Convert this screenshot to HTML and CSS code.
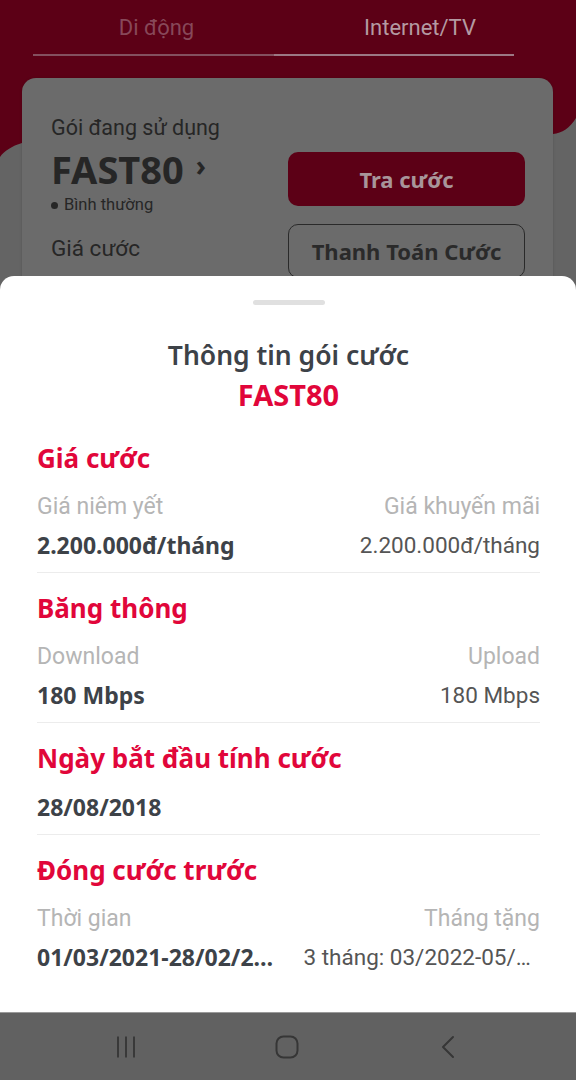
FILE: index.html
```html
<!DOCTYPE html>
<html>
  <head>
    <meta charset="utf-8">
    <link rel="stylesheet" href="styles.css">
  </head>
  <body>
    <div class="screen">
      <!-- page behind the sheet (already dimmed) -->
      <div class="app">
        <div class="hero">
          <nav class="tabs">
            <div class="tab">Di động</div>
            <div class="tab active">Internet/TV</div>
          </nav>
        </div>
        <div class="card">
          <div class="plan">
            <div class="plan-label">Gói đang sử dụng</div>
            <div class="plan-name">FAST80 <span class="chev">›</span></div>
            <div class="plan-status"><i class="dot"></i>Bình thường</div>
            <div class="plan-label price">Giá cước</div>
          </div>
          <div class="actions">
            <div class="btn btn-fill">Tra cước</div>
            <div class="btn btn-line">Thanh Toán Cước</div>
          </div>
        </div>
      </div>

      <!-- bottom sheet -->
      <div class="overlay">
        <div class="sheet">
          <div class="handle"></div>
          <header class="sheet-head">
            <h1>Thông tin gói cước</h1>
            <h2>FAST80</h2>
          </header>

          <section class="info">
            <h3>Giá cước</h3>
            <div class="row labels"><span>Giá niêm yết</span><span>Giá khuyến mãi</span></div>
            <div class="row values"><b>2.200.000đ/tháng</b><span>2.200.000đ/tháng</span></div>
          </section>

          <section class="info">
            <h3>Băng thông</h3>
            <div class="row labels"><span>Download</span><span>Upload</span></div>
            <div class="row values"><b>180 Mbps</b><span>180 Mbps</span></div>
          </section>

          <section class="info">
            <h3>Ngày bắt đầu tính cước</h3>
            <div class="row values"><b>28/08/2018</b></div>
          </section>

          <section class="info last">
            <h3>Đóng cước trước</h3>
            <div class="row labels"><span>Thời gian</span><span>Tháng tặng</span></div>
            <div class="row values"><b>01/03/2021-28/02/2022</b><span>3 tháng: 03/2022-05/2022</span></div>
          </section>
        </div>
      </div>

      <!-- system navigation -->
      <footer class="navbar">
        <svg width="24" height="24" viewBox="0 0 24 24"><path d="M4 1.5v21M12 1.5v21M20 1.5v21" stroke="#363636" stroke-width="1.8" fill="none"/></svg>
        <svg width="24" height="24" viewBox="0 0 24 24"><rect x="1.5" y="1.5" width="21" height="21" rx="7" stroke="#363636" stroke-width="2" fill="none"/></svg>
        <svg width="24" height="24" viewBox="0 0 24 24"><path d="M17 2L7 12l10 10" stroke="#363636" stroke-width="2" fill="none" stroke-linecap="round" stroke-linejoin="round"/></svg>
      </footer>
    </div>
  </body>
</html>
```

FILE: styles.css
```css
/* reset */
* { margin: 0; padding: 0; box-sizing: border-box; }
body { background: #646464; font-family: Roboto, "Noto Sans", sans-serif; }

.screen {
  position: relative;
  width: 576px;
  height: 1080px;
  overflow: hidden;
  background: #646464;
}

/* dimmed page behind the sheet */
.hero {
  height: 160px;
  background: #5c0016;
  clip-path: path('M0 0 H576 V118 C570 128 562 133 553 134 L22 143 C12 146 4 151 0 157 Z');
}
.tabs { display: flex; margin: 0 62px 0 33px; }
.tab {
  flex: 0 0 241px;
  height: 56px;
  padding: 15px 0 0 6px;
  text-align: center;
  font-size: 22px;
  line-height: 26px;
  color: #874859;
  border-bottom: 2px solid #84505f;
}
.tab.active { flex: 1; color: #b49aa2; border-bottom-color: #9c7884; padding-left: 52px; }

.card {
  position: relative;
  display: flex;
  justify-content: space-between;
  margin: -82px 23px 0 22px;
  height: 240px;
  padding: 37px 28px 0 29px;
  background: #6b6b6b;
  border-radius: 14px;
  box-shadow: 0 0 3px rgba(0, 0, 0, 0.15);
  color: #262626;
}
.plan-label { font-size: 21.5px; line-height: 26px; }
.plan-name {
  margin-top: 1px;
  font-family: "Noto Sans", sans-serif;
  font-weight: 700;
  font-size: 38px;
  line-height: 46px;
  white-space: nowrap;
}
.chev { font-size: 28px; vertical-align: 8px; margin-left: 2px; }
.plan-status { display: flex; align-items: center; font-size: 16.5px; line-height: 20px; margin-top: 3px; }
.dot { width: 7px; height: 7px; border-radius: 50%; background: #262626; margin-right: 6px; }
.plan-label.price { margin-top: 20px; font-size: 22.5px; }

.actions { display: flex; flex-direction: column; gap: 18px; margin-top: 37px; width: 237px; }
.btn {
  height: 54px;
  border-radius: 10px;
  display: flex;
  align-items: center;
  justify-content: center;
  font-family: "Noto Sans", sans-serif;
  font-weight: 700;
  font-size: 22px;
}
.btn-fill { background: #5c0016; color: #a8959a; }
.btn-line { border: 1.5px solid #2a2a2a; color: #2a2a2a; }

/* bottom sheet */
.overlay {
  position: absolute;
  left: 0; right: 0; top: 0; bottom: 68px;
  display: flex;
  flex-direction: column;
  justify-content: flex-end;
}
.sheet {
  height: 736px;
  background: #fff;
  border-radius: 14px 14px 0 0;
  padding: 24px 36px 0 37px;
}
.handle { width: 72px; height: 5px; border-radius: 3px; background: #e0e0e0; margin: 0 auto; }
.sheet-head { text-align: center; padding: 34px 0 12px; font-family: "Noto Sans", sans-serif; }
.sheet-head h1 { font-size: 26.5px; line-height: 32px; font-weight: 600; color: #3d4248; }
.sheet-head h2 { font-size: 29px; line-height: 32px; font-weight: 700; color: #e1063a; margin-top: 8px; }

.info { padding: 19px 0 12px; border-bottom: 1px solid #ececec; }
.info.last { border-bottom: none; }
.info h3 {
  font-family: "Noto Sans", sans-serif;
  font-size: 26px;
  line-height: 32px;
  font-weight: 700;
  color: #e1063a;
}
.row { display: grid; grid-template-columns: 1fr 1fr; column-gap: 30px; line-height: 30px; }
.row > * { white-space: nowrap; overflow: hidden; text-overflow: ellipsis; }
.row > :last-child:not(:first-child) { text-align: right; }
.labels { margin-top: 18px; font-size: 23px; color: #b5b5b5; }
.values { margin-top: 8px; font-size: 22.5px; color: #555; }
h3 + .values { margin-top: 18px; }
.values b { font-family: "Noto Sans", sans-serif; font-weight: 700; font-size: 23px; color: #3d4248; }

/* system navigation */
.navbar {
  position: absolute;
  left: 0; right: 0; bottom: 0;
  height: 68px;
  background: #616161;
  border-top: 1px solid #9a9a9a;
  display: flex;
  align-items: center;
  gap: 137px;
  padding-left: 114px;
}
```
